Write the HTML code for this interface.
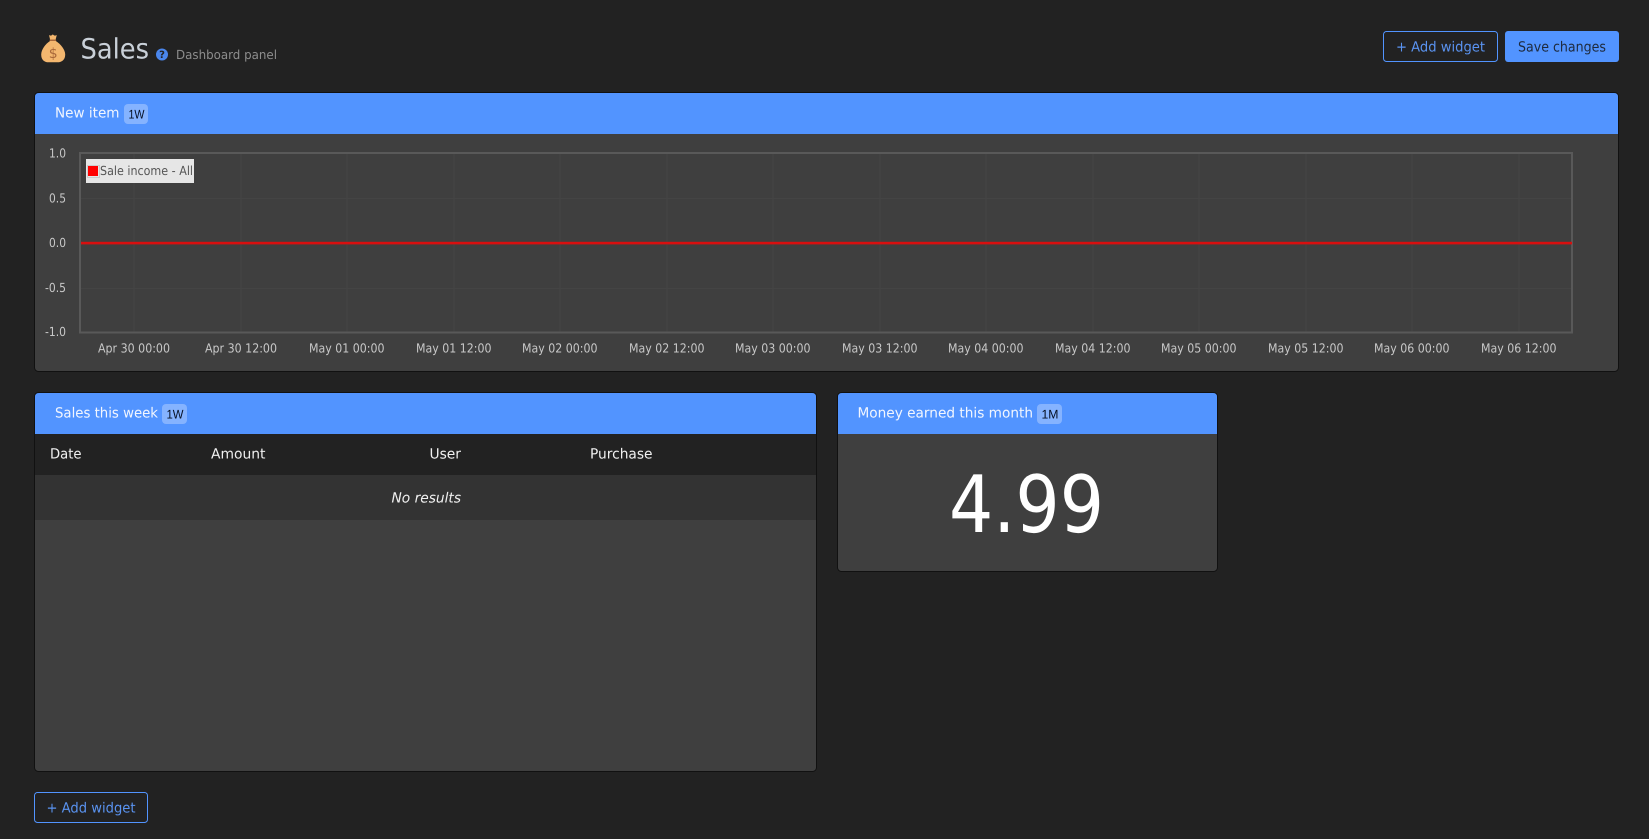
<!DOCTYPE html>
<html lang="en">
<head>
<meta charset="utf-8">
<title>Sales</title>
<style>
html,body{margin:0;padding:0;background:#222;width:1649px;height:839px;overflow:hidden}
svg{display:block}
text{font-family:"DejaVu Sans","Liberation Sans",sans-serif;text-rendering:geometricPrecision}
.h{fill:#f2f6ff;font-size:14px}
.b{fill:#050f22;font-size:12.5px;font-family:"Liberation Sans",sans-serif}
.y{fill:#c8c8c8;font-size:12.5px}
.x{fill:#c8c8c8;font-size:12.5px}
.th{fill:#f0f0f0;font-size:14px}
.g{stroke:#444;stroke-width:1}
</style>
</head>
<body>
<svg width="1649" height="839" viewBox="0 0 1649 839" xmlns="http://www.w3.org/2000/svg">
<rect width="1649" height="839" fill="#222"/>

<!-- page header -->
<path d="M49 35 C50.5 35.8 51.3 36 52.8 34.4 C54.3 36 55.2 35.8 56.8 35 L55.5 40 L50.2 40 Z" fill="#f4b76f"/>
<rect x="49.5" y="39.5" width="6.7" height="1.5" rx=".7" fill="#a9683a"/>
<path d="M50 41 L55.8 41 C60.5 44 65.2 49.5 65.2 54.6 C65.2 60 61.5 62.3 57.5 62.3 L48.5 62.3 C44.5 62.3 41.2 60 41.2 54.6 C41.2 49.5 45.5 44 50 41 Z" fill="#f4b76f"/>
<text x="53.2" y="57.8" font-size="14" fill="#a9683a" text-anchor="middle">$</text>
<text x="80.5" y="58.7" font-size="28" fill="#c9d0d8" textLength="68.5" lengthAdjust="spacingAndGlyphs">Sales</text>
<circle cx="162" cy="54.5" r="6" fill="#4a86ec"/>
<text x="162" y="58.2" font-size="10" font-weight="700" fill="#222" text-anchor="middle">?</text>
<text x="176" y="59" font-size="12.5" fill="#8d8d8d" textLength="101" lengthAdjust="spacingAndGlyphs">Dashboard panel</text>

<!-- top buttons -->
<rect x="1383.5" y="31.5" width="114" height="30" rx="3" fill="none" stroke="#5294ff"/>
<text x="1396" y="51.5" font-size="14" fill="#5a93f0" textLength="89" lengthAdjust="spacingAndGlyphs">+ Add widget</text>
<rect x="1505" y="31" width="114" height="31" rx="3" fill="#5294ff"/>
<text x="1518" y="51.5" font-size="14" fill="#1e2a3d" textLength="88" lengthAdjust="spacingAndGlyphs">Save changes</text>

<!-- chart panel -->
<rect x="34.5" y="92.5" width="1584" height="279" rx="4" fill="#3f3f3f" stroke="#111"/>
<path d="M35 134 L35 97 Q35 93 39 93 L1614 93 Q1618 93 1618 97 L1618 134 Z" fill="#5294ff"/>
<text x="55" y="117.5" class="h" textLength="64.5" lengthAdjust="spacingAndGlyphs">New item</text>
<rect x="124" y="104" width="24" height="20" rx="4" fill="#85b3ff"/>
<text x="128.5" y="118.5" class="b" textLength="16" lengthAdjust="spacingAndGlyphs">1W</text>

<g class="g">
<path d="M134 153V332M241 153V332M347 153V332M454 153V332M560 153V332M667 153V332M773 153V332M880 153V332M986 153V332M1093 153V332M1199 153V332M1306 153V332M1412 153V332M1519 153V332" fill="none"/>
<path d="M80 198.5H1572M80 288.5H1572" fill="none"/>
</g>
<rect x="80" y="153" width="1492" height="179.5" fill="none" stroke="#595959" stroke-width="2"/>
<rect x="81" y="241.8" width="1491" height="2.6" fill="#d80f0f"/>
<rect x="86" y="159" width="108" height="24" fill="#e6e6e6"/>
<rect x="87.5" y="165.5" width="12" height="12" fill="#e6e6e6" stroke="#ccc" stroke-width="1"/>
<rect x="88" y="166" width="10" height="10" fill="#f00"/>
<text x="100" y="175" font-size="12.5" fill="#555" textLength="93" lengthAdjust="spacingAndGlyphs">Sale income - All</text>

<text x="66" y="157.7" class="y" text-anchor="end" textLength="17" lengthAdjust="spacingAndGlyphs">1.0</text>
<text x="66" y="202.7" class="y" text-anchor="end" textLength="17" lengthAdjust="spacingAndGlyphs">0.5</text>
<text x="66" y="247" class="y" text-anchor="end" textLength="17" lengthAdjust="spacingAndGlyphs">0.0</text>
<text x="66" y="292" class="y" text-anchor="end" textLength="21" lengthAdjust="spacingAndGlyphs">-0.5</text>
<text x="66" y="336" class="y" text-anchor="end" textLength="21" lengthAdjust="spacingAndGlyphs">-1.0</text>

<text x="98" y="352.7" class="x" textLength="72" lengthAdjust="spacingAndGlyphs">Apr 30 00:00</text>
<text x="205" y="352.7" class="x" textLength="72" lengthAdjust="spacingAndGlyphs">Apr 30 12:00</text>
<text x="309" y="352.7" class="x" textLength="75.5" lengthAdjust="spacingAndGlyphs">May 01 00:00</text>
<text x="416" y="352.7" class="x" textLength="75.5" lengthAdjust="spacingAndGlyphs">May 01 12:00</text>
<text x="522" y="352.7" class="x" textLength="75.5" lengthAdjust="spacingAndGlyphs">May 02 00:00</text>
<text x="629" y="352.7" class="x" textLength="75.5" lengthAdjust="spacingAndGlyphs">May 02 12:00</text>
<text x="735" y="352.7" class="x" textLength="75.5" lengthAdjust="spacingAndGlyphs">May 03 00:00</text>
<text x="842" y="352.7" class="x" textLength="75.5" lengthAdjust="spacingAndGlyphs">May 03 12:00</text>
<text x="948" y="352.7" class="x" textLength="75.5" lengthAdjust="spacingAndGlyphs">May 04 00:00</text>
<text x="1055" y="352.7" class="x" textLength="75.5" lengthAdjust="spacingAndGlyphs">May 04 12:00</text>
<text x="1161" y="352.7" class="x" textLength="75.5" lengthAdjust="spacingAndGlyphs">May 05 00:00</text>
<text x="1268" y="352.7" class="x" textLength="75.5" lengthAdjust="spacingAndGlyphs">May 05 12:00</text>
<text x="1374" y="352.7" class="x" textLength="75.5" lengthAdjust="spacingAndGlyphs">May 06 00:00</text>
<text x="1481" y="352.7" class="x" textLength="75.5" lengthAdjust="spacingAndGlyphs">May 06 12:00</text>

<!-- sales table panel -->
<rect x="34.5" y="392.5" width="782" height="379" rx="4" fill="#3f3f3f" stroke="#111"/>
<path d="M35 434 L35 397 Q35 393 39 393 L812 393 Q816 393 816 397 L816 434 Z" fill="#5294ff"/>
<text x="55" y="417.5" class="h" textLength="103" lengthAdjust="spacingAndGlyphs">Sales this week</text>
<rect x="162" y="404" width="25" height="20" rx="4" fill="#85b3ff"/>
<text x="166.5" y="418.5" class="b" textLength="17" lengthAdjust="spacingAndGlyphs">1W</text>
<rect x="35" y="434" width="781" height="41" fill="#222"/>
<rect x="35" y="475" width="781" height="45" fill="#333"/>
<text x="50" y="458.5" class="th" textLength="31.5" lengthAdjust="spacingAndGlyphs">Date</text>
<text x="211" y="458.5" class="th" textLength="54.5" lengthAdjust="spacingAndGlyphs">Amount</text>
<text x="429.5" y="458.5" class="th" textLength="31.5" lengthAdjust="spacingAndGlyphs">User</text>
<text x="590" y="458.5" class="th" textLength="62.5" lengthAdjust="spacingAndGlyphs">Purchase</text>
<text x="391.5" y="502.5" font-size="14" font-style="italic" fill="#f0f0f0" textLength="69.5" lengthAdjust="spacingAndGlyphs">No results</text>

<!-- money panel -->
<rect x="837.5" y="392.5" width="380" height="179" rx="4" fill="#3f3f3f" stroke="#111"/>
<path d="M838 434 L838 397 Q838 393 842 393 L1213 393 Q1217 393 1217 397 L1217 434 Z" fill="#5294ff"/>
<text x="857.5" y="417.5" class="h" textLength="175.5" lengthAdjust="spacingAndGlyphs">Money earned this month</text>
<rect x="1037" y="404" width="25" height="20" rx="4" fill="#85b3ff"/>
<text x="1041.5" y="418.5" class="b" textLength="17" lengthAdjust="spacingAndGlyphs">1M</text>
<text x="949" y="532" font-size="79" fill="#fff" textLength="155" lengthAdjust="spacingAndGlyphs">4.99</text>

<!-- bottom button -->
<rect x="34.5" y="792.5" width="113" height="30" rx="3" fill="none" stroke="#5294ff"/>
<text x="46.5" y="812.5" font-size="14" fill="#5a93f0" textLength="89" lengthAdjust="spacingAndGlyphs">+ Add widget</text>
</svg>
</body>
</html>
